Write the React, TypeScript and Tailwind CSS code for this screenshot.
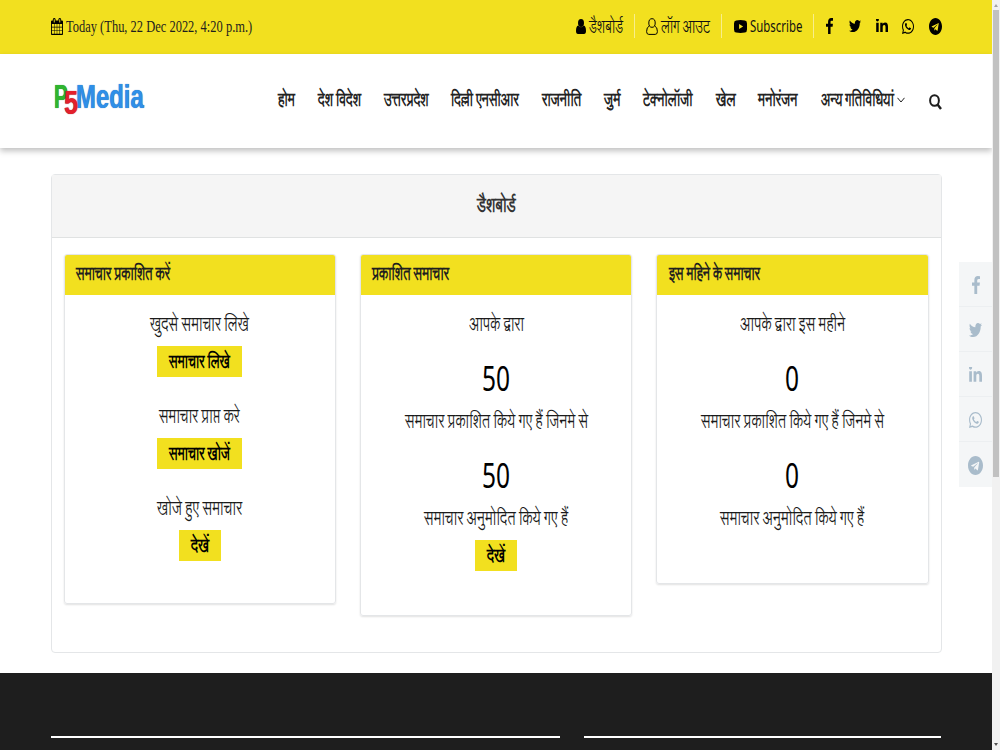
import { useLayoutEffect, useRef, useState, type ReactNode } from 'react';
import { FaTwitter, FaLinkedinIn, FaWhatsapp, FaTelegram } from 'react-icons/fa';

type FitProps = { children: ReactNode; width: number; className?: string };

// One line of text, condensed horizontally to fill the given width.
function Fit({ children, width, className = '' }: FitProps) {
  const ref = useRef<HTMLSpanElement>(null);
  const [scale, setScale] = useState(1);

  useLayoutEffect(() => {
    if (ref.current) setScale(width / ref.current.offsetWidth);
  }, [width]);

  return (
    <span className={`block shrink-0 whitespace-nowrap ${className}`} style={{ width }}>
      <span
        ref={ref}
        className="inline-block origin-left"
        style={{ transform: `scaleX(${scale})` }}
      >
        {children}
      </span>
    </span>
  );
}

function FacebookIcon({ className, viewBox }: { className: string; viewBox: string }) {
  return (
    <svg viewBox={viewBox} preserveAspectRatio="none" className={className} fill="currentColor">
      <path d="M959 12v264h-157q-86 0-116 36t-30 108v189h293l-39 296h-254v759h-306v-759h-255v-296h255v-218q0-186 104-288.500t277-102.500q147 0 228 12z" />
    </svg>
  );
}

const socials = [
  { Icon: FacebookIcon, box: '95 0 864 1664', top: 'ml-3 h-[16px] w-[7px]', side: 'h-[18px] w-[8px]' },
  { Icon: FaTwitter, box: '0 48 512 416', top: 'ml-4 h-[12px] w-[12px]', side: 'h-[14px] w-[13px]' },
  { Icon: FaLinkedinIn, box: '0 32 448 448', top: 'ml-[15px] h-[14px] w-[12px]', side: 'h-[16px] w-[13px]' },
  { Icon: FaWhatsapp, box: '0 32 448 448', top: 'ml-[14px] h-[15px] w-[12px]', side: 'h-[16px] w-[13px]' },
  { Icon: FaTelegram, box: '0 8 496 496', top: 'ml-[15px] h-[17px] w-[13px]', side: 'h-[19px] w-[15px]' },
];

const navItems = [
  { label: 'होम', width: 17 },
  { label: 'देश विदेश', width: 43 },
  { label: 'उत्तरप्रदेश', width: 44.5 },
  { label: 'दिल्ली एनसीआर', width: 68 },
  { label: 'राजनीति', width: 39 },
  { label: 'जुर्म', width: 16.5 },
  { label: 'टेक्नोलॉजी', width: 49.5 },
  { label: 'खेल', width: 19.5 },
  { label: 'मनोरंजन', width: 39.5 },
  { label: 'अन्य गतिविधियां', width: 73 },
];

function CalendarIcon() {
  return (
    <svg viewBox="64 0 1664 1792" preserveAspectRatio="none" className="h-[17px] w-3" fill="currentColor">
      <path d="M192 1664h288v-288h-288v288zm352 0h320v-288h-320v288zm-352-352h288v-320h-288v320zm352 0h320v-320h-320v320zm-352-384h288v-288h-288v288zm736 736h320v-288h-320v288zm-384-736h320v-288h-320v288zm768 736h288v-288h-288v288zm-384-352h320v-320h-320v320zm-352-864v-288q0-13-9.500-22.500t-22.500-9.500h-64q-13 0-22.500 9.500t-9.500 22.500v288q0 13 9.500 22.500t22.500 9.500h64q13 0 22.500-9.500t9.500-22.500zm736 864h288v-320h-288v320zm-384-384h320v-288h-320v288zm384 0h288v-288h-288v288zm32-480v-288q0-13-9.500-22.500t-22.500-9.500h-64q-13 0-22.500 9.500t-9.500 22.500v288q0 13 9.500 22.500t22.500 9.500h64q13 0 22.500-9.500t9.500-22.500zm384-64v1280q0 52-38 90t-90 38h-1408q-52 0-90-38t-38-90v-1280q0-52 38-90t90-38h128v-96q0-66 47-113t113-47h64q66 0 113 47t47 113v96h384v-96q0-66 47-113t113-47h64q66 0 113 47t47 113v96h128q52 0 90 38t38 90z" />
    </svg>
  );
}

function TopBar() {
  return (
    <div className="flex h-[54px] items-center bg-[#f2e01f] pb-[2px] pl-[51px] text-black">
      <CalendarIcon />
      <Fit width={186} className="ml-[3px] mt-px font-['Liberation_Serif',serif] text-[16.5px] leading-6 text-[#1e1e1e] [word-spacing:normal]">
        Today (Thu, 22 Dec 2022, 4:20 p.m.)
      </Fit>
      <svg viewBox="0 0 10 15" className="ml-[324px] h-[15px] w-[10px]" preserveAspectRatio="none" fill="currentColor">
        <ellipse cx="5" cy="4" rx="3" ry="4" />
        <path d="M2.200 6.500Q0 7 0 12q0 3 2 3h6q2 0 2-3 0-5-2.200-5.500Q5 10 2.200 6.500z" />
      </svg>
      <Fit width={34} className="ml-[3px] pt-1 text-[18px] leading-6 text-[#111]">डैशबोर्ड</Fit>
      <i className="ml-[11px] h-6 w-px bg-[#f8ee8c]" />
      <svg viewBox="0 0 12 17" className="ml-[11px] h-[17px] w-[12px]" preserveAspectRatio="none" fill="none" stroke="currentColor">
        <ellipse cx="6" cy="5" rx="3.200" ry="4.300" />
        <path d="M3.300 8Q.6 9 .6 13.500q0 2.900 2.200 2.900h6.400q2.200 0 2.200-2.900Q11.400 9 8.700 8" />
      </svg>
      <Fit width={49} className="ml-[3px] pt-1 text-[18px] leading-6 text-[#111]">लॉग आउट</Fit>
      <i className="ml-[11px] h-6 w-px bg-[#f8ee8c]" />
      <svg viewBox="0 0 12 13" className="ml-3 h-[13px] w-[13px]" preserveAspectRatio="none" fill="currentColor">
        <path fillRule="evenodd" d="M2 .4Q6-.3 10 .4q2 .2 2 3v6q0 2.800-2 3.200-4 .6-8 0-2-.4-2-3.200v-6q0-2.800 2-3zM4.700 4v5L8.400 6.500z" />
      </svg>
      <Fit width={52} className="ml-[3px] font-['Noto_Sans',sans-serif] text-[16px] leading-6 text-[#111]">Subscribe</Fit>
      <i className="ml-[11px] h-6 w-px bg-[#f8ee8c]" />
      {socials.map(({ Icon, box, top }) => (
        <Icon key={box + top} viewBox={box} preserveAspectRatio="none" className={`shrink-0 ${top}`} />
      ))}
    </div>
  );
}

function Logo() {
  return (
    <div className="flex w-[90px] items-start font-['Liberation_Sans',sans-serif] font-bold leading-8">
      <Fit width={14} className="text-[34px] text-[#2fb52f] [text-shadow:0_0_1px_#0a7a10]">P</Fit>
      <Fit width={14} className="z-10 -ml-1 mt-[6px] text-[34px] text-[#e3202c] [text-shadow:0_0_1px_#8c0410]">5</Fit>
      <Fit width={67.5} className="-ml-[2px] text-[34px] text-[#2f8fe8] [text-shadow:0_0_1px_#1455a5]">Media</Fit>
    </div>
  );
}

function Header() {
  return (
    <header className="flex h-[94px] pl-[54px] shadow-[0_3px_6px_rgba(0,0,0,0.25)]">
      <div className="mt-[26px]">
        <Logo />
      </div>
      <nav className="ml-[134px] mt-[35px] flex gap-[22.9px] text-[18px] font-bold leading-6 text-[#222]">
        {navItems.map((item) => (
          <Fit key={item.label} width={item.width}>{item.label}</Fit>
        ))}
      </nav>
      <svg viewBox="0 0 8 6" className="ml-[3px] mt-[43px] h-[6px] w-2" fill="none" stroke="#222">
        <path d="M.5.8 4 5 7.500.8" />
      </svg>
      <svg viewBox="0 0 13 16" className="ml-6 mt-[40px] h-4 w-[13px]" fill="none" stroke="#1e1e1e" strokeWidth="2">
        <ellipse cx="5.500" cy="6.500" rx="4.400" ry="5.300" />
        <path d="M8.500 10.500 12 15" strokeWidth="2.400" />
      </svg>
    </header>
  );
}

function Panel({ title, width, className, children }: { title: string; width: number; className: string; children: ReactNode }) {
  return (
    <section className={`w-[272.5px] rounded-[3px] border border-[#e4e6e8] shadow-[0_1px_2px_rgba(0,0,0,0.12)] ${className}`}>
      <h2 className="h-10 rounded-t-[2px] bg-[#f2e01f] pl-[11.5px] pt-[8px] text-[18px] font-bold leading-6 text-[#1e1e1e]">
        <Fit width={width}>{title}</Fit>
      </h2>
      <div className="flex flex-col items-center">{children}</div>
    </section>
  );
}

function Line({ children, width, className = '' }: FitProps) {
  return <Fit width={width} className={`h-7 text-[20px] leading-8 text-[#1a1a1a] ${className}`}>{children}</Fit>;
}

function Action({ children, width }: FitProps) {
  return (
    <button className="mt-[9px] flex h-[31px] bg-[#f2e01f] px-3 pt-[5px] text-[18px] font-bold leading-6 text-black [word-spacing:-1.500px]">
      <Fit width={width} className="text-left">{children}</Fit>
    </button>
  );
}

function Count({ children, width }: FitProps) {
  return <Fit width={width} className="mb-[5px] mt-[18px] font-['Noto_Sans',sans-serif] text-[35px] leading-[46px] text-black">{children}</Fit>;
}

function Dashboard() {
  return (
    <main className="ml-[51px] mt-[26px] h-[479px] w-[891px] rounded-[4px] border border-[#e4e6e8]">
      <h1 className="flex h-[63px] justify-center border-b border-[#e0e2e2] bg-[#f5f5f5] pt-[17px] text-[20px] font-bold leading-7 text-[#333]">
        <Fit width={39}>डैशबोर्ड</Fit>
      </h1>
      <div className="flex items-start gap-[23.8px] pl-[11.5px] pt-4">
        <Panel title="समाचार प्रकाशित करें" width={94} className="h-[350px]">
          <Line width={99} className="mt-[14px]">खुदसे समाचार लिखे</Line>
          <Action width={61}>समाचार लिखे</Action>
          <Line width={81} className="mt-6">समाचार प्राप्त करे</Line>
          <Action width={61}>समाचार खोजें</Action>
          <Line width={85} className="mt-6">खोजे हुए समाचार</Line>
          <Action width={18}>देखें</Action>
        </Panel>
        <Panel title="प्रकाशित समाचार" width={77} className="h-[362px]">
          <Line width={55} className="mt-[14px]">आपके द्वारा</Line>
          <Count width={28}>50</Count>
          <Line width={183}>समाचार प्रकाशित किये गए हैं जिनमे से</Line>
          <Count width={28}>50</Count>
          <Line width={144}>समाचार अनुमोदित किये गए हैं</Line>
          <Action width={18}>देखें</Action>
        </Panel>
        <Panel title="इस महिने के समाचार" width={91} className="h-[330px]">
          <Line width={105} className="mt-[14px]">आपके द्वारा इस महीने</Line>
          <Count width={14}>0</Count>
          <Line width={183}>समाचार प्रकाशित किये गए हैं जिनमे से</Line>
          <Count width={14}>0</Count>
          <Line width={144}>समाचार अनुमोदित किये गए हैं</Line>
        </Panel>
      </div>
    </main>
  );
}

function ShareRail() {
  return (
    <aside className="absolute left-[959px] top-[262px] w-[33px] divide-y divide-[#eceff1] bg-[#f4f6f7] text-[#a9bccb]">
      {socials.map(({ Icon, box, side }) => (
        <div key={box + side} className="flex h-[45px] items-center justify-center pt-px">
          <Icon viewBox={box} preserveAspectRatio="none" className={side} />
        </div>
      ))}
    </aside>
  );
}

function Scrollbar() {
  return (
    <div className="flex w-2 flex-col items-center justify-between bg-[#f1f1f1]">
      <div>
        <svg viewBox="0 0 8 10" className="h-[10px] w-2" fill="#a3a3a3">
          <path d="M2 7h4L4 4z" />
        </svg>
        <div className="mx-auto h-[467px] w-[6px] bg-[#c1c1c1]" />
      </div>
      <svg viewBox="0 0 8 10" className="h-[10px] w-2" fill="#505050">
        <path d="M2 3h4L4 6z" />
      </svg>
    </div>
  );
}

export default function App() {
  return (
    <div
      lang="hi"
      className="relative flex h-[750px] w-[1000px] overflow-hidden bg-white font-['Lohit_Devanagari','Noto_Sans',sans-serif] [word-spacing:-1.500px]"
    >
      <div className="flex w-[992px] flex-col overflow-hidden">
        <TopBar />
        <Header />
        <Dashboard />
        <footer className="mt-5 flex flex-1 gap-6 bg-[#1e1e1e] pl-[51px] pt-[63px]">
          <hr className="h-[2px] w-[509px] border-0 bg-white" />
          <hr className="h-[2px] w-[357px] border-0 bg-white" />
        </footer>
      </div>
      <Scrollbar />
      <ShareRail />
    </div>
  );
}
